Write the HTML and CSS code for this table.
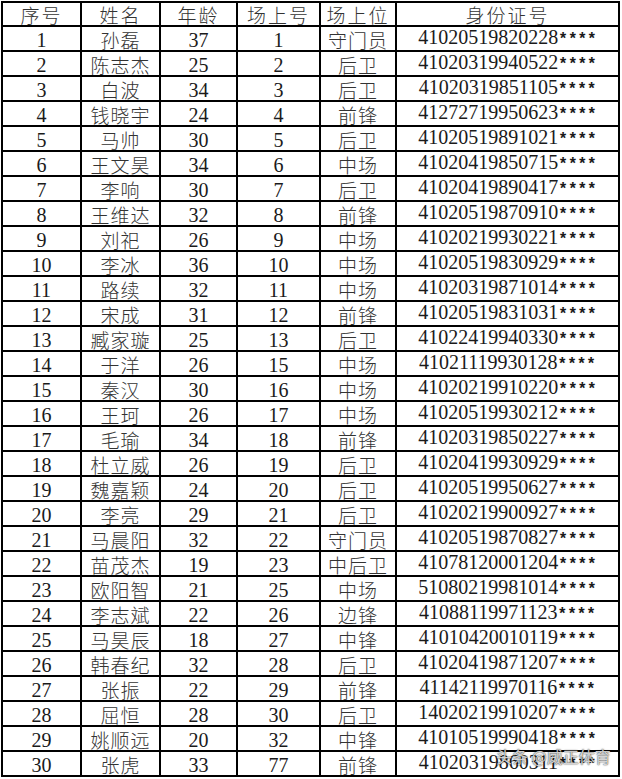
FILE: index.html
```html
<!DOCTYPE html>
<html lang="zh-CN">
<head>
<meta charset="utf-8">
<title>球员名单</title>
<link rel="stylesheet" href="styles.css">
</head>
<body>
<div class="sheet">
<table class="roster">
<colgroup>
<col class="c-no"><col class="c-name"><col class="c-age"><col class="c-num"><col class="c-pos"><col class="c-id">
</colgroup>
<thead>
<tr><th>序号</th><th>姓名</th><th>年龄</th><th>场上号</th><th>场上位</th><th>身份证号</th></tr>
</thead>
<tbody>
<tr><td>1</td><td class="cn">孙磊</td><td>37</td><td>1</td><td class="cn">守门员</td><td>41020519820228<span class="mask">****</span></td></tr>
<tr><td>2</td><td class="cn">陈志杰</td><td>25</td><td>2</td><td class="cn">后卫</td><td>41020319940522<span class="mask">****</span></td></tr>
<tr><td>3</td><td class="cn">白波</td><td>34</td><td>3</td><td class="cn">后卫</td><td>41020319851105<span class="mask">****</span></td></tr>
<tr><td>4</td><td class="cn">钱晓宇</td><td>24</td><td>4</td><td class="cn">前锋</td><td>41272719950623<span class="mask">****</span></td></tr>
<tr><td>5</td><td class="cn">马帅</td><td>30</td><td>5</td><td class="cn">后卫</td><td>41020519891021<span class="mask">****</span></td></tr>
<tr><td>6</td><td class="cn">王文昊</td><td>34</td><td>6</td><td class="cn">中场</td><td>41020419850715<span class="mask">****</span></td></tr>
<tr><td>7</td><td class="cn">李响</td><td>30</td><td>7</td><td class="cn">后卫</td><td>41020419890417<span class="mask">****</span></td></tr>
<tr><td>8</td><td class="cn">王维达</td><td>32</td><td>8</td><td class="cn">前锋</td><td>41020519870910<span class="mask">****</span></td></tr>
<tr><td>9</td><td class="cn">刘祀</td><td>26</td><td>9</td><td class="cn">中场</td><td>41020219930221<span class="mask">****</span></td></tr>
<tr><td>10</td><td class="cn">李冰</td><td>36</td><td>10</td><td class="cn">中场</td><td>41020519830929<span class="mask">****</span></td></tr>
<tr><td>11</td><td class="cn">路续</td><td>32</td><td>11</td><td class="cn">中场</td><td>41020319871014<span class="mask">****</span></td></tr>
<tr><td>12</td><td class="cn">宋成</td><td>31</td><td>12</td><td class="cn">前锋</td><td>41020519831031<span class="mask">****</span></td></tr>
<tr><td>13</td><td class="cn">臧家璇</td><td>25</td><td>13</td><td class="cn">后卫</td><td>41022419940330<span class="mask">****</span></td></tr>
<tr><td>14</td><td class="cn">于洋</td><td>26</td><td>15</td><td class="cn">中场</td><td>41021119930128<span class="mask">****</span></td></tr>
<tr><td>15</td><td class="cn">秦汉</td><td>30</td><td>16</td><td class="cn">中场</td><td>41020219910220<span class="mask">****</span></td></tr>
<tr><td>16</td><td class="cn">王珂</td><td>26</td><td>17</td><td class="cn">中场</td><td>41020519930212<span class="mask">****</span></td></tr>
<tr><td>17</td><td class="cn">毛瑜</td><td>34</td><td>18</td><td class="cn">前锋</td><td>41020319850227<span class="mask">****</span></td></tr>
<tr><td>18</td><td class="cn">杜立威</td><td>26</td><td>19</td><td class="cn">后卫</td><td>41020419930929<span class="mask">****</span></td></tr>
<tr><td>19</td><td class="cn">魏嘉颖</td><td>24</td><td>20</td><td class="cn">后卫</td><td>41020519950627<span class="mask">****</span></td></tr>
<tr><td>20</td><td class="cn">李亮</td><td>29</td><td>21</td><td class="cn">后卫</td><td>41020219900927<span class="mask">****</span></td></tr>
<tr><td>21</td><td class="cn">马晨阳</td><td>32</td><td>22</td><td class="cn">守门员</td><td>41020519870827<span class="mask">****</span></td></tr>
<tr><td>22</td><td class="cn">苗茂杰</td><td>19</td><td>23</td><td class="cn">中后卫</td><td>41078120001204<span class="mask">****</span></td></tr>
<tr><td>23</td><td class="cn">欧阳智</td><td>21</td><td>25</td><td class="cn">中场</td><td>51080219981014<span class="mask">****</span></td></tr>
<tr><td>24</td><td class="cn">李志斌</td><td>22</td><td>26</td><td class="cn">边锋</td><td>41088119971123<span class="mask">****</span></td></tr>
<tr><td>25</td><td class="cn">马昊辰</td><td>18</td><td>27</td><td class="cn">中锋</td><td>41010420010119<span class="mask">****</span></td></tr>
<tr><td>26</td><td class="cn">韩春纪</td><td>32</td><td>28</td><td class="cn">后卫</td><td>41020419871207<span class="mask">****</span></td></tr>
<tr><td>27</td><td class="cn">张振</td><td>22</td><td>29</td><td class="cn">前锋</td><td>41142119970116<span class="mask">****</span></td></tr>
<tr><td>28</td><td class="cn">屈恒</td><td>28</td><td>30</td><td class="cn">后卫</td><td>14020219910207<span class="mask">****</span></td></tr>
<tr><td>29</td><td class="cn">姚顺远</td><td>20</td><td>32</td><td class="cn">中锋</td><td>41010519990418<span class="mask">****</span></td></tr>
<tr><td>30</td><td class="cn">张虎</td><td>33</td><td>77</td><td class="cn">前锋</td><td>41020319860311<span class="mask">****</span></td></tr>
</tbody>
</table>
<div class="watermark">头条 @威正体育</div>
</div>
</body>
</html>
```

FILE: styles.css
```css
html, body {
  margin: 0;
  padding: 0;
  background: #ffffff;
}

.sheet {
  position: relative;
  width: 622px;
  height: 779px;
  padding: 1px 0 0 1px;
  box-sizing: border-box;
}

.roster {
  border-collapse: collapse;
  table-layout: fixed;
  width: 619px;
  font-family: "Liberation Serif", "Noto Sans CJK SC", serif;
  font-size: 20px;
  color: #1a1a1a;
}

.c-no { width: 79px; }
.c-name { width: 79px; }
.c-age { width: 77px; }
.c-num { width: 83px; }
.c-pos { width: 76px; }
.c-id { width: 223px; }

.roster tr { height: 25px; }
.roster thead tr { height: 24px; }

.roster th,
.roster td {
  border: 2px solid #000;
  padding: 0;
  text-align: center;
  vertical-align: bottom;
  line-height: 20px;
  white-space: nowrap;
}

.roster th {
  font-family: "Noto Sans CJK SC", sans-serif;
  font-weight: 300;
  font-size: 19px;
  color: #333;
  letter-spacing: 2px;
  line-height: 21px;
}

.roster td.cn {
  font-family: "Noto Sans CJK SC", sans-serif;
  font-weight: 300;
  font-size: 19px;
  color: #333;
  letter-spacing: 1px;
}

.mask {
  font-family: "Liberation Mono", monospace;
  font-weight: bold;
  font-size: 16px;
}

.watermark {
  position: absolute;
  left: 496px;
  top: 745px;
  font-family: "Noto Sans CJK SC", sans-serif;
  font-size: 16px;
  line-height: 22px;
  color: rgba(255, 255, 255, 0.8);
  text-shadow: 0 0 1px rgba(0, 0, 0, 0.8), 0 0 2px rgba(0, 0, 0, 0.5);
  white-space: nowrap;
}
```
